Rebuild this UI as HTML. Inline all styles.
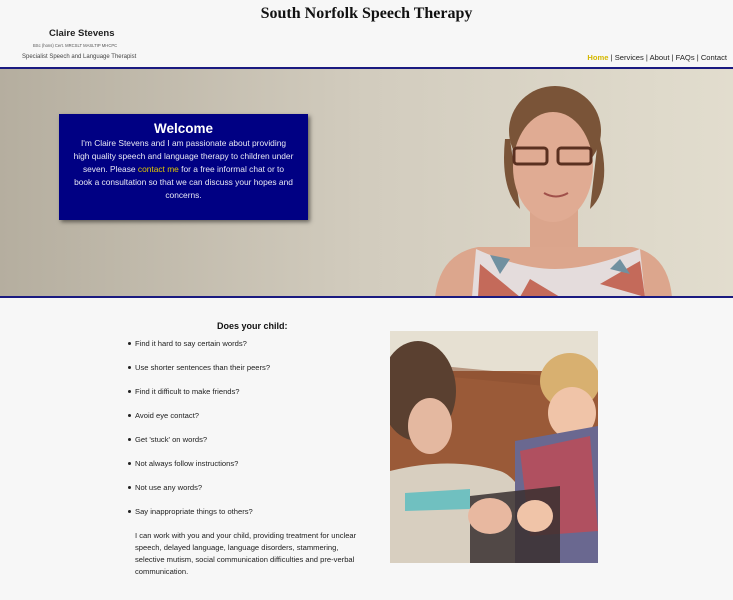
<!DOCTYPE html>
<html><head><meta charset="utf-8"><style>
*{margin:0;padding:0;box-sizing:border-box}
body{width:733px;height:600px;background:#f7f7f7;font-family:"Liberation Sans",sans-serif;position:relative;overflow:hidden;color:#222}
.a{position:absolute}
h1{position:absolute;left:0;width:733px;top:5px;text-align:center;font-family:"Liberation Serif",serif;font-size:16px;font-weight:bold;color:#111}
ul{position:absolute;left:135px;top:338px;list-style:none;font-size:7.6px;color:#222}
li{height:24px;line-height:12px;position:relative}
li:before{content:"";position:absolute;left:-7px;top:4px;width:3px;height:3px;border-radius:50%;background:#222}
</style></head><body>
<h1>South Norfolk Speech Therapy</h1>
<div class="a" style="left:49px;top:28px;font-size:9.5px;font-weight:bold">Claire Stevens</div>
<div class="a" style="left:33px;top:43px;font-size:4.2px;color:#555">BSc (hons) Cert. MRCSLT MASLTIP MHCPC</div>
<div class="a" style="left:22px;top:54px;font-size:6px;color:#444">Specialist Speech and Language Therapist</div>
<div class="a" style="right:6px;top:53px;font-size:7.6px;color:#222"><span style="color:#d4b800;font-weight:bold">Home</span> | Services | About | FAQs | Contact</div>
<div class="a" style="left:0;top:67px;width:733px;height:2px;background:#1a1a80"></div>
<svg class="a" style="left:0;top:69px" width="733" height="228">
<defs><linearGradient id="g" x1="0" x2="1"><stop offset="0" stop-color="#b5ae9f"/><stop offset=".5" stop-color="#d2ccbe"/><stop offset="1" stop-color="#e2ddce"/></linearGradient></defs>
<rect width="733" height="228" fill="url(#g)"/>
<ellipse cx="555" cy="62" rx="46" ry="45" fill="#7a5438"/>
<path d="M505 70 Q500 120 520 140 L510 70Z M600 70 Q612 120 590 140 L598 70Z" fill="#7a5438"/>
<rect x="530" y="130" width="48" height="60" fill="#dba58c"/>
<ellipse cx="553" cy="98" rx="40" ry="55" fill="#e0ab93"/>
<path d="M435 228 Q440 185 478 178 L632 178 Q668 185 672 228Z" fill="#dca68d"/>
<path d="M472 228 L476 180 Q520 200 555 200 Q590 200 640 180 L645 228Z" fill="#e4dcdc"/>
<path d="M480 195 L520 228 L478 228Z M600 215 L640 192 L645 228Z M530 210 L560 228 L520 228Z" fill="#c46a5a"/>
<path d="M490 186 L500 205 L510 190Z M620 190 L630 205 L610 200Z" fill="#7090a0"/>
<rect x="514" y="79" width="33" height="16" rx="3" fill="none" stroke="#5a3020" stroke-width="3"/>
<rect x="558" y="79" width="33" height="16" rx="3" fill="none" stroke="#5a3020" stroke-width="3"/>
<path d="M544 124 Q556 131 568 124" stroke="#a0504a" stroke-width="2" fill="none"/>
</svg>
<div class="a" style="left:0;top:296px;width:733px;height:2px;background:#1a1a80"></div>
<div class="a" style="left:59px;top:114px;width:249px;height:106px;background:#000083;box-shadow:2px 2px 4px rgba(0,0,0,.5);color:#e8e8f4;text-align:center;padding:0 14px">
<div style="font-size:13.5px;font-weight:bold;margin-top:7px;color:#fff">Welcome</div>
<div style="font-size:8.4px;line-height:13px;margin-top:1px">I'm Claire Stevens and I am passionate about providing high quality speech and language therapy to children under seven. Please <span style="color:#e0c800">contact me</span> for a free informal chat or to book a consultation so that we can discuss your hopes and concerns.</div>
</div>
<div class="a" style="left:217px;top:321px;font-size:9px;font-weight:bold;color:#111">Does your child:</div>
<ul>
<li>Find it hard to say certain words?</li>
<li>Use shorter sentences than their peers?</li>
<li>Find it difficult to make friends?</li>
<li>Avoid eye contact?</li>
<li>Get 'stuck' on words?</li>
<li>Not always follow instructions?</li>
<li>Not use any words?</li>
<li>Say inappropriate things to others?</li>
</ul>
<div class="a" style="left:135px;top:530px;width:235px;font-size:7.6px;line-height:12px;color:#222">I can work with you and your child, providing treatment for unclear speech, delayed language, language disorders, stammering, selective mutism, social communication difficulties and pre-verbal communication.</div>
<svg class="a" style="left:390px;top:331px" width="208" height="232">
<rect width="208" height="232" fill="#9a5a38"/>
<rect width="208" height="40" fill="#e6e0d2"/>
<path d="M0 30 L208 50 L208 60 L0 40Z" fill="#8a4e30" opacity=".5"/>
<path d="M0 140 Q60 125 110 140 Q140 150 150 232 L0 232Z" fill="#d8cfc0"/>
<ellipse cx="28" cy="60" rx="38" ry="50" fill="#5a4030"/>
<ellipse cx="40" cy="95" rx="22" ry="28" fill="#e4b8a0"/>
<ellipse cx="180" cy="50" rx="30" ry="28" fill="#d8b070"/>
<ellipse cx="182" cy="82" rx="24" ry="26" fill="#f0c4a8"/>
<path d="M125 110 L208 95 L208 232 L125 232Z" fill="#6a6890"/>
<path d="M130 120 L200 105 L208 200 L140 205Z" fill="#b05060"/>
<path d="M15 162 L80 158 L80 178 L15 180Z" fill="#70c0c0"/>
<path d="M80 165 L170 155 L170 232 L80 232Z" fill="#3a3030" opacity=".85"/>
<ellipse cx="100" cy="185" rx="22" ry="18" fill="#e8b8a0"/>
<ellipse cx="145" cy="185" rx="18" ry="16" fill="#f0c4a8"/>
</svg>
</body></html>
